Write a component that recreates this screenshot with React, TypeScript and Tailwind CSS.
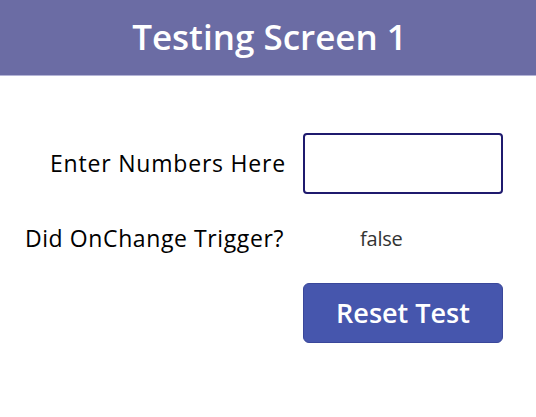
import React, { useState } from "react";

export default function App() {
  const [value, setValue] = useState("");
  const [changed, setChanged] = useState(false);
  return (
    <div className="w-[536px] h-[417px] bg-white" style={{ fontFamily: '"Open Sans", "Noto Sans", sans-serif' }}>
      <div className="h-[76px] bg-[#6b6ca4] border-b border-[#b4b4d6] flex items-center justify-center">
        <h1 className="text-[35px] font-semibold text-white leading-none pb-[2px] pl-[3px]">Testing Screen 1</h1>
      </div>
      <div className="grid grid-cols-[286px_200px] gap-x-[17px] pt-[57px]">
        <div className="flex items-center justify-end text-[23px] font-medium tracking-[0.8px] text-black">
          Enter Numbers Here
        </div>
        <input
          value={value}
          onChange={(e) => { setValue(e.target.value); setChanged(true); }}
          className="h-[61px] w-[200px] border-2 border-[#1f1a6e] rounded-[4px] px-3 text-[20px] outline-none"
        />
        <div className="h-[89px] flex items-center justify-end text-[23px] font-medium tracking-[0.6px] text-black pr-[2px]">
          Did OnChange Trigger?
        </div>
        <div className="h-[89px] flex items-center pl-[57px] text-[20px] text-[#333] tracking-[-0.2px]">{changed ? "true" : "false"}</div>
        <div />
        <button
          onClick={() => { setValue(""); setChanged(false); }}
          className="h-[60px] w-[200px] bg-[#4656ad] border border-[#3a479a] rounded-[6px] text-white text-[27px] font-semibold leading-none pb-[2px]"
        >
          Reset Test
        </button>
      </div>
    </div>
  );
}
